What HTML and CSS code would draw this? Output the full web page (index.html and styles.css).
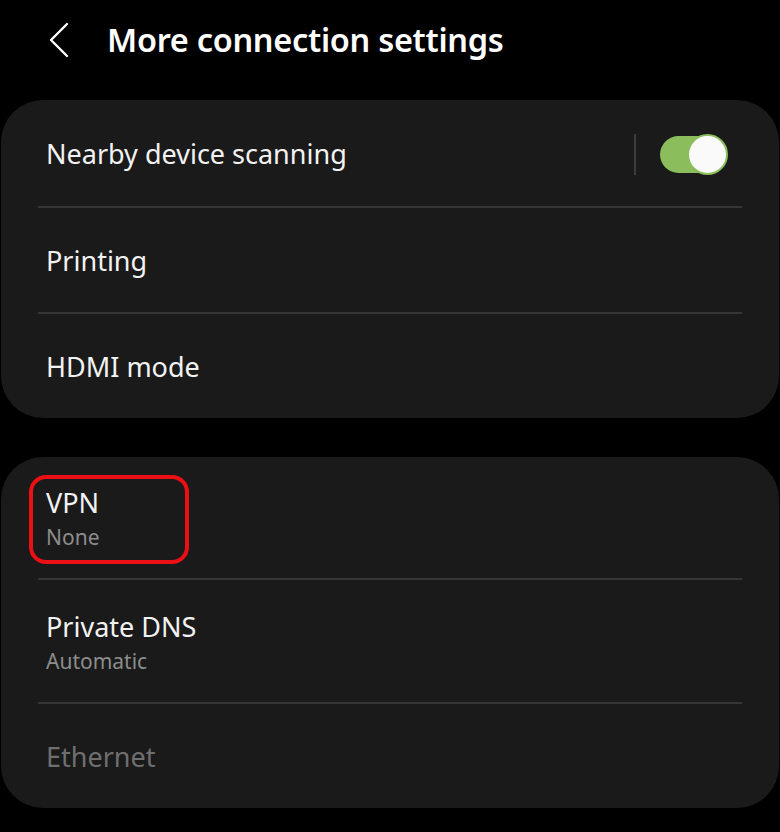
FILE: index.html
```html
<!DOCTYPE html>
<html>
<head>
<meta charset="utf-8">
<link rel="stylesheet" href="styles.css">
</head>
<body>
<div class="screen">
  <header class="header">
    <svg class="back" width="20" height="36" viewBox="0 0 20 36">
      <path d="M18 2 L2 18 L18 34" fill="none" stroke="#ffffff" stroke-width="2.4" stroke-linecap="round" stroke-linejoin="round"/>
    </svg>
    <h1 class="title">More connection settings</h1>
  </header>

  <section class="card">
    <div class="row row-1">
      <span class="label">Nearby device scanning</span>
      <div class="switch-wrap">
        <span class="vline"></span>
        <span class="switch"><span class="knob"></span></span>
      </div>
    </div>
    <div class="divider"></div>
    <div class="row row-2">
      <span class="label">Printing</span>
    </div>
    <div class="divider"></div>
    <div class="row row-2">
      <span class="label">HDMI mode</span>
    </div>
  </section>

  <section class="card card-2">
    <div class="row row-vpn">
      <div class="stack">
        <span class="label">VPN</span>
        <span class="sub">None</span>
      </div>
      <span class="highlight"></span>
    </div>
    <div class="divider"></div>
    <div class="row row-dns">
      <div class="stack">
        <span class="label">Private DNS</span>
        <span class="sub">Automatic</span>
      </div>
    </div>
    <div class="divider"></div>
    <div class="row row-eth">
      <span class="label disabled">Ethernet</span>
    </div>
  </section>
</div>
</body>
</html>
```

FILE: styles.css
```css
html, body {
  margin: 0;
  padding: 0;
  background: #000000;
}

.screen {
  width: 780px;
  height: 832px;
  background: #000000;
  font-family: "Noto Sans", "Open Sans", sans-serif;
  color: #f4f4f4;
  overflow: hidden;
}

.header {
  height: 100px;
  display: flex;
  align-items: flex-start;
  box-sizing: border-box;
  padding-left: 49px;
}

.back {
  margin-top: 22px;
  flex: none;
}

.title {
  margin: 20px 0 0 38px;
  font-size: 32.5px;
  line-height: 40px;
  font-weight: 600;
  color: #ffffff;
  letter-spacing: -0.3px;
}

.card {
  position: relative;
  margin: 0 1px;
  background: #1a1a1a;
  border-radius: 42px;
  display: flex;
  flex-direction: column;
}

.card-2 {
  margin-top: 39px;
}

.row {
  position: relative;
  display: flex;
  align-items: center;
  padding-left: 45px;
  padding-right: 53px;
  padding-top: 2px;
  box-sizing: border-box;
}

.row-1 {
  height: 106px;
}

.row-2 {
  height: 104px;
}

.row-vpn {
  height: 121px;
}

.row-dns {
  height: 122px;
}

.row-eth {
  height: 104px;
}

.divider {
  height: 2px;
  margin: 0 37px;
  background: #363636;
}

.label {
  font-size: 27px;
  line-height: 34px;
  color: #f2f2f2;
}

.label.disabled {
  color: #6f6f6f;
}

.stack {
  display: flex;
  flex-direction: column;
}

.sub {
  margin-top: 3px;
  font-size: 21px;
  line-height: 28px;
  color: #8c8c8c;
}

.switch-wrap {
  margin-left: auto;
  display: flex;
  align-items: center;
  gap: 24px;
}

.vline {
  width: 2px;
  height: 41px;
  background: #3d3d3d;
}

.switch {
  position: relative;
  width: 66px;
  height: 37px;
  border-radius: 19px;
  background: #8bbd5c;
}

.knob {
  position: absolute;
  right: -2px;
  top: -2px;
  width: 37px;
  height: 37px;
  border-radius: 50%;
  background: #fafafa;
  border: 2px solid #8bbd5c;
}

.highlight {
  position: absolute;
  left: 28px;
  top: 18px;
  width: 152px;
  height: 81px;
  border: 4px solid #ec1014;
  border-radius: 17px;
}
```
